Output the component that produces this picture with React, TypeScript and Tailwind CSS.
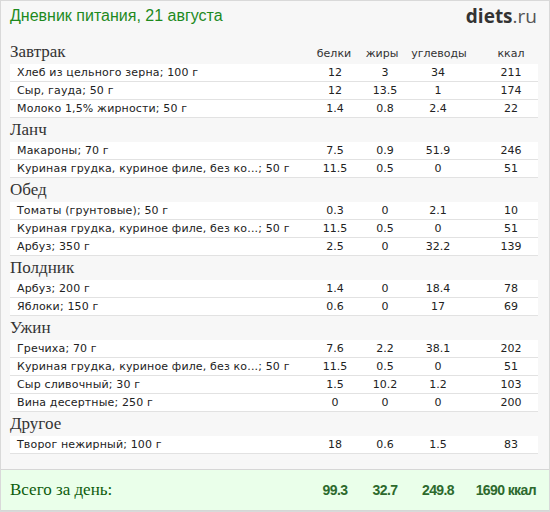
import React from "react";

type Row = [string, string, string, string, string];
type Section = { title: string; rows: Row[] };

const sections: Section[] = [
  {
    title: "Завтрак",
    rows: [
      ["Хлеб из цельного зерна; 100 г", "12", "3", "34", "211"],
      ["Сыр, гауда; 50 г", "12", "13.5", "1", "174"],
      ["Молоко 1,5% жирности; 50 г", "1.4", "0.8", "2.4", "22"],
    ],
  },
  {
    title: "Ланч",
    rows: [
      ["Макароны; 70 г", "7.5", "0.9", "51.9", "246"],
      ["Куриная грудка, куриное филе, без ко...; 50 г", "11.5", "0.5", "0", "51"],
    ],
  },
  {
    title: "Обед",
    rows: [
      ["Томаты (грунтовые); 50 г", "0.3", "0", "2.1", "10"],
      ["Куриная грудка, куриное филе, без ко...; 50 г", "11.5", "0.5", "0", "51"],
      ["Арбуз; 350 г", "2.5", "0", "32.2", "139"],
    ],
  },
  {
    title: "Полдник",
    rows: [
      ["Арбуз; 200 г", "1.4", "0", "18.4", "78"],
      ["Яблоки; 150 г", "0.6", "0", "17", "69"],
    ],
  },
  {
    title: "Ужин",
    rows: [
      ["Гречиха; 70 г", "7.6", "2.2", "38.1", "202"],
      ["Куриная грудка, куриное филе, без ко...; 50 г", "11.5", "0.5", "0", "51"],
      ["Сыр сливочный; 30 г", "1.5", "10.2", "1.2", "103"],
      ["Вина десертные; 250 г", "0", "0", "0", "200"],
    ],
  },
  {
    title: "Другое",
    rows: [["Творог нежирный; 100 г", "18", "0.6", "1.5", "83"]],
  },
];

const sans = { fontFamily: '"DejaVu Sans", Verdana, sans-serif' };
const serif = { fontFamily: '"Liberation Serif", Georgia, serif' };

export default function App() {
  return (
    <div className="w-[550px] h-[512px] bg-[#f7f7f7] border border-[#d9d9d9] flex flex-col overflow-hidden">
      <div className="h-[39px] flex items-start justify-between pl-[9px] pr-[12px]">
        <div
          className="pt-[5px] text-[16px] leading-[20px] text-[#1e8a1e]"
          style={{ fontFamily: '"Liberation Sans", Tahoma, sans-serif' }}
        >
          Дневник питания, 21 августа
        </div>
        <div
          className="pt-[3px] text-[19px] leading-[24px] text-[#333]"
          style={{ fontFamily: '"Open Sans", sans-serif' }}
        >
          <span className="font-bold">diets</span>
          <span className="text-[#555]">.ru</span>
        </div>
      </div>

      <div className="pl-[9px] pr-[11px]">
        {sections.map((s, si) => (
          <div key={si}>
            <div className="h-[24px] flex items-end">
              <div
                className="w-[300px] pb-[1px] text-[17px] leading-[22px] text-[#333]"
                style={serif}
              >
                {s.title}
              </div>
              {si === 0 && (
                <div
                  className="flex text-[11px] leading-[20px] text-[#333] pb-[0px]"
                  style={sans}
                >
                  <div className="w-[48px] text-center">белки</div>
                  <div className="w-[48px] text-center">жиры</div>
                  <div className="w-[66px] text-center">углеводы</div>
                  <div className="w-[14px]"></div>
                  <div className="w-[50px] text-center">ккал</div>
                </div>
              )}
            </div>
            {s.rows.map((r, ri) => (
              <div
                key={ri}
                className="h-[18px] bg-white border-b border-[#e2e2e2] flex items-center text-[11px] leading-[17px] text-[#222]"
                style={sans}
              >
                <div className="w-[300px] pl-[7px] whitespace-nowrap overflow-hidden tracking-[0.15px]">{r[0]}</div>
                <div className="w-[50px] text-center">{r[1]}</div>
                <div className="w-[50px] text-center">{r[2]}</div>
                <div className="w-[56px] text-center">{r[3]}</div>
                <div className="w-[20px]"></div>
                <div className="w-[50px] text-center">{r[4]}</div>
              </div>
            ))}
          </div>
        ))}
      </div>

      <div className="flex-1"></div>

      <div className="h-[42px] bg-[#eaffea] border-t border-b border-[#d6d6d6] flex items-center pl-[9px] pr-[11px]">
        <div className="w-[300px] text-[17px] leading-[22px] text-[#0c5c0c]" style={serif}>
          Всего за день:
        </div>
        <div
          className="flex font-bold text-[14px] leading-[18px] text-[#2d6a2d] tracking-[-0.6px]"
          style={{ fontFamily: '"Liberation Sans Narrow", "Liberation Sans", Arial, sans-serif' }}
        >
          <div className="w-[50px] text-center">99.3</div>
          <div className="w-[50px] text-center">32.7</div>
          <div className="w-[56px] text-center">249.8</div>
          <div className="w-[70px] text-right">1690 ккал</div>
        </div>
      </div>
    </div>
  );
}
